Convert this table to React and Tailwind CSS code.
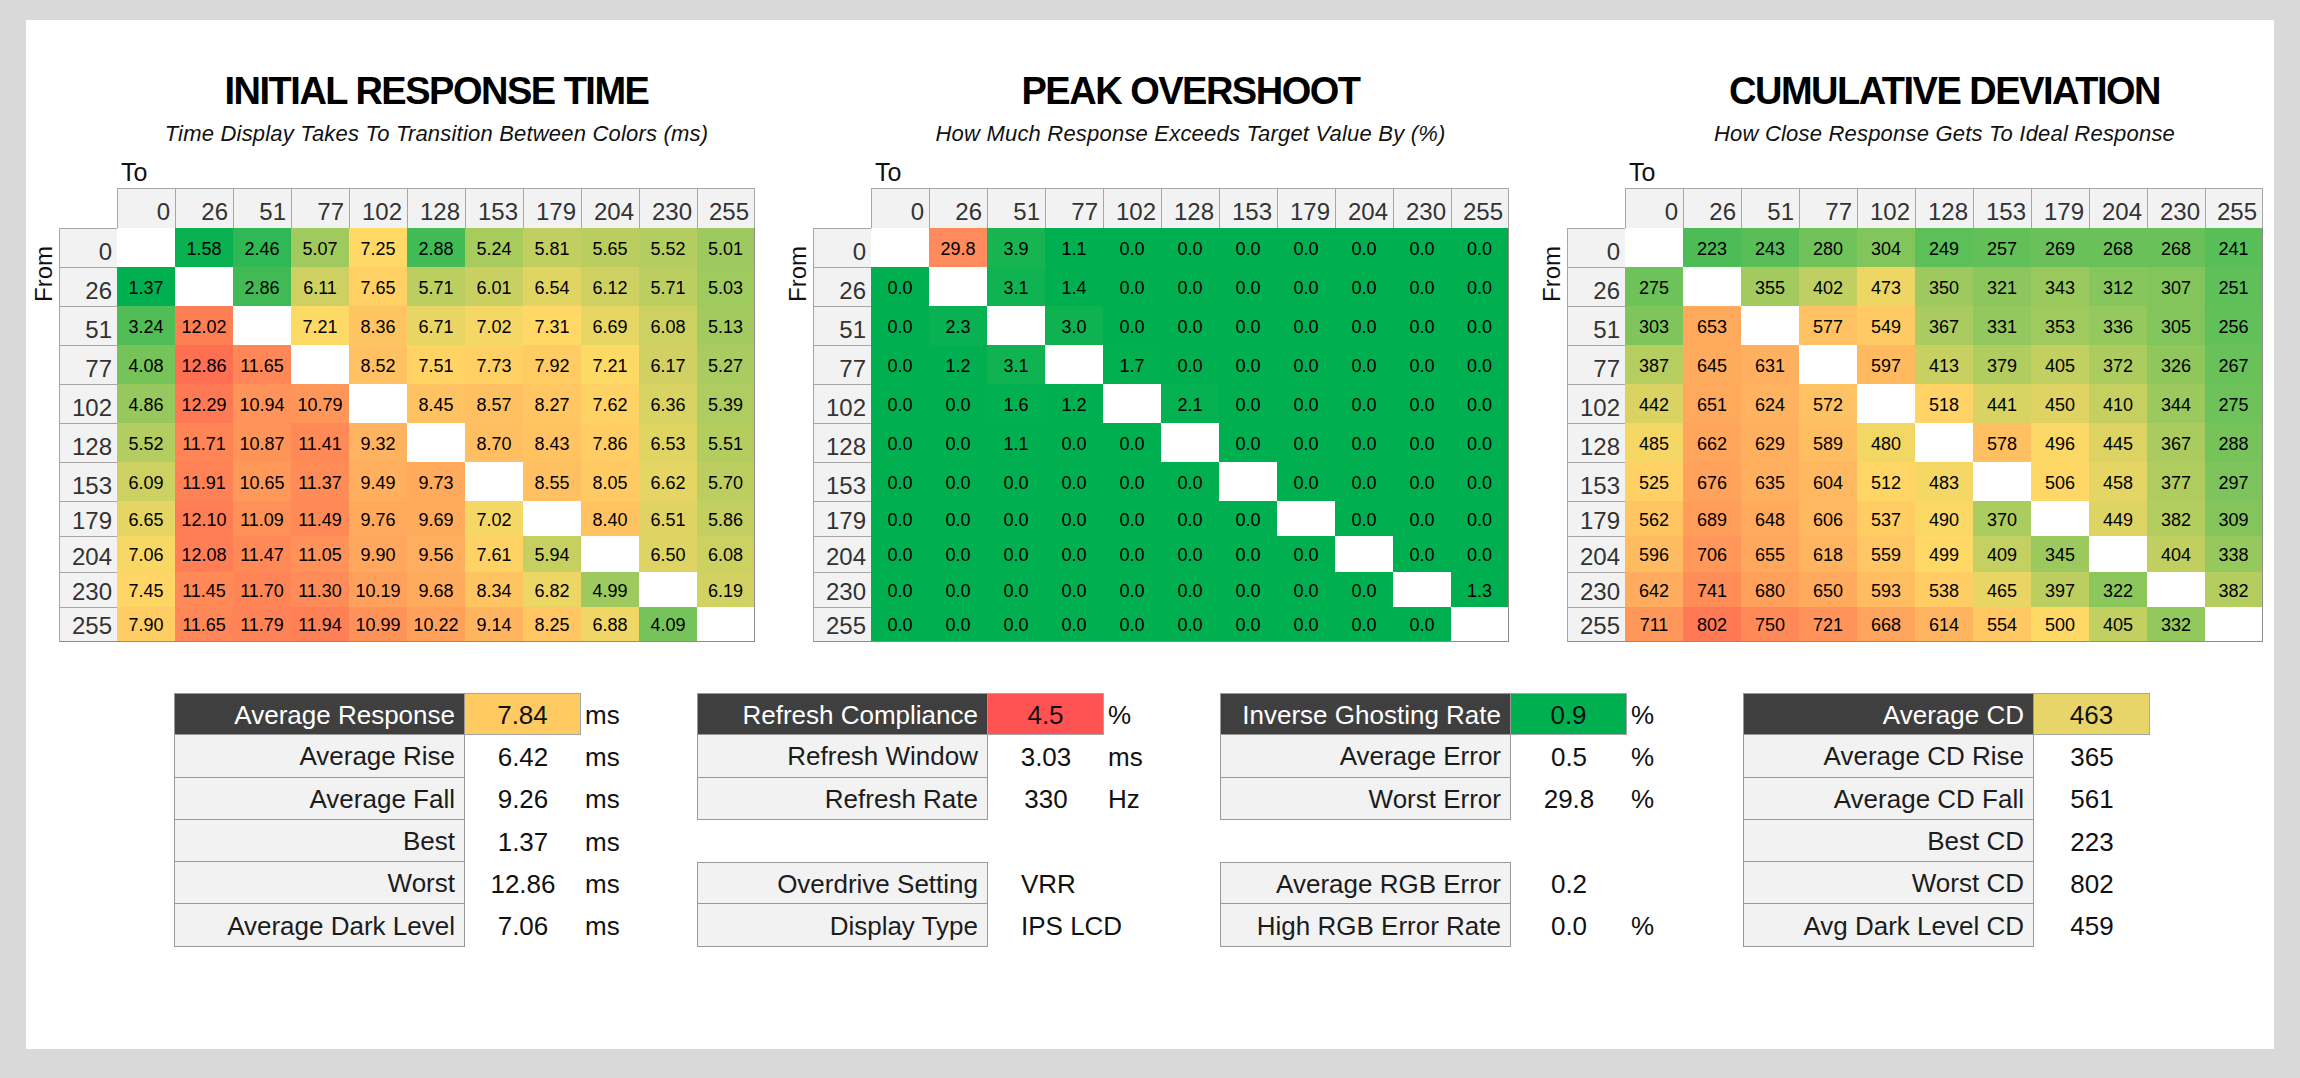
import React from 'react'

const LABELS = [0, 26, 51, 77, 102, 128, 153, 179, 204, 230, 255]

const IRT = [
  [null, 1.58, 2.46, 5.07, 7.25, 2.88, 5.24, 5.81, 5.65, 5.52, 5.01],
  [1.37, null, 2.86, 6.11, 7.65, 5.71, 6.01, 6.54, 6.12, 5.71, 5.03],
  [3.24, 12.02, null, 7.21, 8.36, 6.71, 7.02, 7.31, 6.69, 6.08, 5.13],
  [4.08, 12.86, 11.65, null, 8.52, 7.51, 7.73, 7.92, 7.21, 6.17, 5.27],
  [4.86, 12.29, 10.94, 10.79, null, 8.45, 8.57, 8.27, 7.62, 6.36, 5.39],
  [5.52, 11.71, 10.87, 11.41, 9.32, null, 8.7, 8.43, 7.86, 6.53, 5.51],
  [6.09, 11.91, 10.65, 11.37, 9.49, 9.73, null, 8.55, 8.05, 6.62, 5.7],
  [6.65, 12.1, 11.09, 11.49, 9.76, 9.69, 7.02, null, 8.4, 6.51, 5.86],
  [7.06, 12.08, 11.47, 11.05, 9.9, 9.56, 7.61, 5.94, null, 6.5, 6.08],
  [7.45, 11.45, 11.7, 11.3, 10.19, 9.68, 8.34, 6.82, 4.99, null, 6.19],
  [7.9, 11.65, 11.79, 11.94, 10.99, 10.22, 9.14, 8.25, 6.88, 4.09, null],
]

// overshoot: mostly zero, fill the rest
const OVS = LABELS.map((_, r) => LABELS.map((_, c) => (r === c ? null : 0)))
OVS[0][1] = 29.8
OVS[0][2] = 3.9
OVS[0][3] = 1.1
OVS[1][2] = 3.1
OVS[1][3] = 1.4
OVS[2][1] = 2.3
OVS[2][3] = 3.0
OVS[3][1] = 1.2
OVS[3][2] = 3.1
OVS[3][4] = 1.7
OVS[4][2] = 1.6
OVS[4][3] = 1.2
OVS[4][5] = 2.1
OVS[5][2] = 1.1
OVS[9][10] = 1.3

const CD = [
  [null, 223, 243, 280, 304, 249, 257, 269, 268, 268, 241],
  [275, null, 355, 402, 473, 350, 321, 343, 312, 307, 251],
  [303, 653, null, 577, 549, 367, 331, 353, 336, 305, 256],
  [387, 645, 631, null, 597, 413, 379, 405, 372, 326, 267],
  [442, 651, 624, 572, null, 518, 441, 450, 410, 344, 275],
  [485, 662, 629, 589, 480, null, 578, 496, 445, 367, 288],
  [525, 676, 635, 604, 512, 483, null, 506, 458, 377, 297],
  [562, 689, 648, 606, 537, 490, 370, null, 449, 382, 309],
  [596, 706, 655, 618, 559, 499, 409, 345, null, 404, 338],
  [642, 741, 680, 650, 593, 538, 465, 397, 322, null, 382],
  [711, 802, 750, 721, 668, 614, 554, 500, 405, 332, null],
]

const GREEN = [0, 176, 80]
const YELLOW = [255, 217, 102]
const RED = [255, 110, 82]

function mix(a, b, t) {
  const k = Math.max(0, Math.min(1, t))
  return `rgb(${a.map((x, i) => Math.round(x + (b[i] - x) * k)).join(',')})`
}

function scale3(v, min, mid, max) {
  if (v <= mid) return mix(GREEN, YELLOW, (v - min) / (mid - min))
  return mix(YELLOW, RED, (v - mid) / (max - mid))
}

const HEATMAPS = [
  {
    title: 'INITIAL RESPONSE TIME',
    sub: 'Time Display Takes To Transition Between Colors (ms)',
    rows: IRT,
    fmt: (v) => v.toFixed(2),
    color: (v) => scale3(v, 1.37, 7.25, 12.9),
  },
  {
    title: 'PEAK OVERSHOOT',
    sub: 'How Much Response Exceeds Target Value By (%)',
    rows: OVS,
    fmt: (v) => v.toFixed(1),
    color: (v) => (v >= 20 ? '#ff8a5b' : mix(GREEN, YELLOW, Math.max(0, v - 1.5) / 25)),
  },
  {
    title: 'CUMULATIVE DEVIATION',
    sub: 'How Close Response Gets To Ideal Response',
    rows: CD,
    fmt: (v) => String(v),
    color: (v) => scale3(v, 104, 500, 840),
  },
]

const STATS = [
  [
    ['Average Response', '7.84', 'ms', '#ffca62'],
    ['Average Rise', '6.42', 'ms'],
    ['Average Fall', '9.26', 'ms'],
    ['Best', '1.37', 'ms'],
    ['Worst', '12.86', 'ms'],
    ['Average Dark Level', '7.06', 'ms'],
  ],
  [
    ['Refresh Compliance', '4.5', '%', '#ff5252'],
    ['Refresh Window', '3.03', 'ms'],
    ['Refresh Rate', '330', 'Hz'],
    null,
    ['Overdrive Setting', 'VRR', '', null, true],
    ['Display Type', 'IPS LCD', '', null, true],
  ],
  [
    ['Inverse Ghosting Rate', '0.9', '%', '#00b050'],
    ['Average Error', '0.5', '%'],
    ['Worst Error', '29.8', '%'],
    null,
    ['Average RGB Error', '0.2', ''],
    ['High RGB Error Rate', '0.0', '%'],
  ],
  [
    ['Average CD', '463', '', '#e8d56a'],
    ['Average CD Rise', '365', ''],
    ['Average CD Fall', '561', ''],
    ['Best CD', '223', ''],
    ['Worst CD', '802', ''],
    ['Avg Dark Level CD', '459', ''],
  ],
]

function Heatmap({ map }) {
  const last = LABELS.length - 1
  return (
    <div className="flex w-[726px] flex-col">
      <div className="ml-[87px] mt-[52px] h-[38px] w-[639px] whitespace-nowrap text-center text-[38px] font-bold leading-[38px] tracking-[-1.5px] text-black">
        {map.title}
      </div>
      <div className="ml-[87px] mt-[13px] h-[22px] w-[639px] whitespace-nowrap text-center text-[22px] italic leading-[22px] tracking-[0.2px] text-[#111]">
        {map.sub}
      </div>
      <div className="mt-[15px] flex">
        <div className="w-[29px] pt-[86px]">
          <div className="ml-[1px] rotate-180 text-[24px] leading-[26px] text-[#111] [writing-mode:vertical-rl]">
            From
          </div>
        </div>
        <div className="flex flex-col">
          <div className="h-[25px] pl-[62px] text-[25px] leading-[25px] text-[#111]">To</div>
          <div className="mt-[3px] grid grid-cols-[repeat(12,58px)] grid-rows-[40px_repeat(7,39px)_repeat(4,35.25px)]">
            <div />
            {LABELS.map((l, c) => (
              <div
                key={l}
                className={`flex items-end justify-end border-l border-t border-[#a6a6a6] bg-[#f2f2f2] pb-[4px] pr-[5px] text-[24px] leading-none text-[#333] ${
                  c === last ? 'border-r' : ''
                }`}
              >
                {l}
              </div>
            ))}
            {map.rows.map((row, r) => (
              <React.Fragment key={r}>
                <div
                  className={`flex items-end justify-end border-l border-t border-[#a6a6a6] bg-[#f2f2f2] pb-[3px] pr-[5px] text-[24px] leading-none text-[#333] ${
                    r === last ? 'border-b border-b-[#8c8c8c]' : ''
                  }`}
                >
                  {LABELS[r]}
                </div>
                {row.map((v, c) => (
                  <div
                    key={c}
                    className={`flex items-center justify-center pt-[3px] text-[18px] leading-none text-black ${
                      c === last ? 'border-r border-[#8c8c8c]' : ''
                    } ${r === last ? 'border-b border-[#8c8c8c]' : ''}`}
                    style={{ backgroundColor: v === null ? '#ffffff' : map.color(v) }}
                  >
                    {v === null ? '' : map.fmt(v)}
                  </div>
                ))}
              </React.Fragment>
            ))}
          </div>
        </div>
      </div>
    </div>
  )
}

function StatGroup({ rows }) {
  return (
    <div className="flex w-[523px] flex-col">
      {rows.map((row, i) => {
        if (!row) return <div key={i} className="h-[42.3px]" />
        const [label, value, unit, bg, isText] = row
        const head = Boolean(bg)
        const prevEmpty = i === 0 || !rows[i - 1]
        return (
          <div key={i} className="flex h-[42.3px]">
            <div
              className={`flex w-[291px] items-center justify-end whitespace-nowrap border-b border-l border-r border-[#9a9a9a] pr-[9px] pt-[2px] text-[26px] ${
                prevEmpty ? 'border-t' : ''
              } ${head ? 'bg-[#3f3f3f] text-white' : 'bg-[#f2f2f2] text-[#1c1c1c]'}`}
            >
              {label}
            </div>
            <div
              className={`flex w-[116px] items-center whitespace-nowrap pt-[2px] text-[26px] text-[#111] ${
                isText ? 'justify-start pl-[33px]' : 'justify-center'
              } ${head ? 'border-b border-r border-t border-[#a6a6a6]' : ''}`}
              style={head ? { backgroundColor: bg } : undefined}
            >
              {value}
            </div>
            <div className="flex w-[116px] items-center pl-[4px] pt-[2px] text-[26px] text-[#111]">{unit}</div>
          </div>
        )
      })}
    </div>
  )
}

export default function App() {
  return (
    <div className="h-[1078px] w-[2300px] bg-[#d9d9d9] pb-[29px] pl-[26px] pr-[26px] pt-[20px] font-['Liberation_Sans','Arial',sans-serif]">
      <div className="flex h-full w-full flex-col bg-white">
        <div className="flex gap-[28px] pl-[4px]">
          {HEATMAPS.map((m) => (
            <Heatmap key={m.title} map={m} />
          ))}
        </div>
        <div className="ml-[148px] mt-[51px] flex">
          {STATS.map((rows, i) => (
            <StatGroup key={i} rows={rows} />
          ))}
        </div>
      </div>
    </div>
  )
}
